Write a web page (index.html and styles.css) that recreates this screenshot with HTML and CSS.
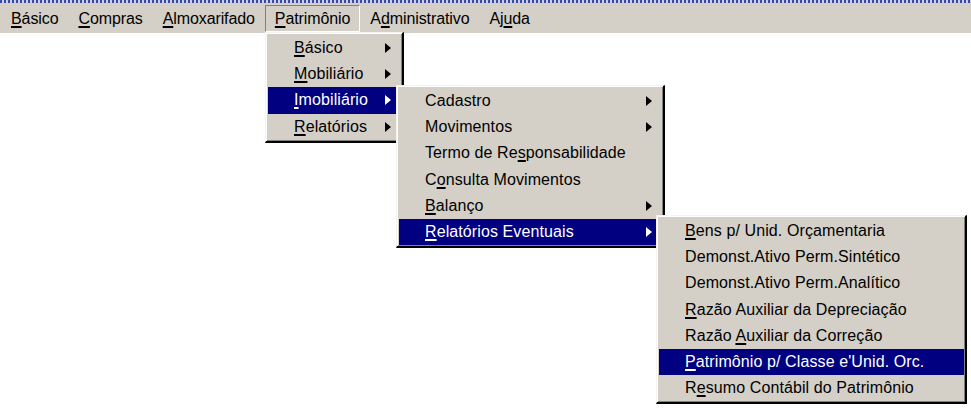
FILE: index.html
```html
<!DOCTYPE html>
<html lang="pt">
<head>
    <meta charset="UTF-8">
    <title>Patrimônio</title>
    <link rel="stylesheet" href="styles.css">
</head>
<body>

<div class="topline"></div>
<nav class="menubar">
    <span class="bar-item"><u>B</u>ásico</span>
    <span class="bar-item"><u>C</u>ompras</span>
    <span class="bar-item"><u>A</u>lmoxarifado</span>
    <span class="bar-item open"><u>P</u>atrimônio</span>
    <span class="bar-item">A<u>d</u>ministrativo</span>
    <span class="bar-item">Aj<u>u</u>da</span>
</nav>

<!-- Patrimônio -->
<div class="menu menu-1">
    <div class="menu-item sub"><span class="label"><u>B</u>ásico</span></div>
    <div class="menu-item sub"><span class="label"><u>M</u>obiliário</span></div>
    <div class="menu-item sub active"><span class="label"><u>I</u>mobiliário</span></div>
    <div class="menu-item sub"><span class="label"><u>R</u>elatórios</span></div>
</div>

<!-- Imobiliário -->
<div class="menu menu-2">
    <div class="menu-item sub"><span class="label">Cadastro</span></div>
    <div class="menu-item sub"><span class="label">Movimentos</span></div>
    <div class="menu-item"><span class="label">Termo de Re<u>s</u>ponsabilidade</span></div>
    <div class="menu-item"><span class="label">C<u>o</u>nsulta Movimentos</span></div>
    <div class="menu-item sub"><span class="label"><u>B</u>alanço</span></div>
    <div class="menu-item sub active"><span class="label"><u>R</u>elatórios Eventuais</span></div>
</div>

<!-- Relatórios Eventuais -->
<div class="menu menu-3">
    <div class="menu-item"><span class="label"><u>B</u>ens p/ Unid. Orçamentaria</span></div>
    <div class="menu-item"><span class="label">Demonst.Ativo Perm.Sintético</span></div>
    <div class="menu-item"><span class="label">Demonst.Ativo Perm.Analítico</span></div>
    <div class="menu-item"><span class="label"><u>R</u>azão Auxiliar da Depreciação</span></div>
    <div class="menu-item"><span class="label">Razão <u>A</u>uxiliar da Correção</span></div>
    <div class="menu-item active"><span class="label"><u>P</u>atrimônio p/ Classe e'Unid. Orc.</span></div>
    <div class="menu-item"><span class="label">R<u>e</u>sumo Contábil do Patrimônio</span></div>
</div>

</body>
</html>
```

FILE: styles.css
```css
* { margin: 0; padding: 0; box-sizing: border-box; }
body {
    background: #fff; width: 971px; height: 411px; overflow: hidden; position: relative;
    font-family: "Liberation Sans", Arial, sans-serif; font-size: 16px; color: #000;
}
u { text-decoration-thickness: 2px; text-underline-offset: 2px; }

.topline {
    height: 3px;
    background: repeating-linear-gradient(90deg, #3b4a9e 0 2px, #c9cde6 2px 4px);
}
.menubar {
    display: flex; height: 30px; padding: 2px 1px 1px; background: #d4d0c8;
    letter-spacing: -0.1px;
}
.bar-item {
    height: 27px; line-height: 25px; padding: 0 9px; white-space: nowrap;
    border: 1px solid transparent;
}
.bar-item.open { border-color: #808080 #fff #fff #808080; }

.menu {
    position: absolute; background: #d4d0c8; padding: 2px 1px 1px 2px;
    border-style: solid; border-width: 1px 2px 2px 1px;
    border-color: #f4f3ef #000 #000 #f4f3ef;
    box-shadow: inset 1px 1px #fff, inset -1px -1px #808080;
    letter-spacing: 0.1px;
}
.menu-1 { left: 265px; top: 32px; width: 139px; z-index: 1; }
.menu-2 { left: 396px; top: 85px; width: 269px; z-index: 2; }
.menu-3 { left: 656px; top: 215px; width: 311px; z-index: 3; }

.menu-item {
    display: flex; align-items: center; height: 26.2px;
    padding-left: 26px; white-space: nowrap;
}
.menu-item .label { flex: 1; }
.menu-item.sub::after {
    content: ""; margin-right: 10px;
    border-left: 6px solid #000; border-top: 5px solid transparent; border-bottom: 5px solid transparent;
}
.menu-item.active { background: #000080; color: #fff; }
.menu-item.active.sub::after { border-left-color: #fff; }
```
